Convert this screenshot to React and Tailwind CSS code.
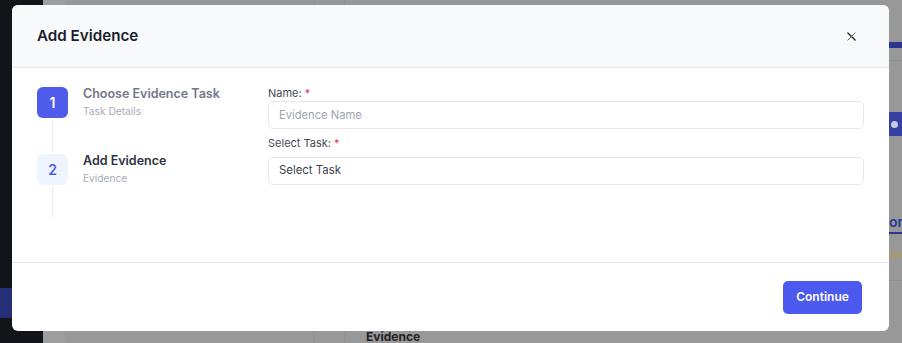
import React from 'react';

const font = { fontFamily: 'Inter, "Noto Sans", sans-serif' };

function Step({ num, title, sub, active }) {
    return (
        <div className="flex">
            <div className="flex flex-col items-center w-[31px]">
                <div className={active
                    ? "w-[31px] h-[31px] rounded-[6px] bg-[#4f5bea] text-white flex items-center justify-center text-[14px] font-semibold"
                    : "w-[31px] h-[31px] rounded-[6px] bg-[#eef5ff] text-[#4f5bea] flex items-center justify-center text-[14px] font-semibold"}>
                    {num}
                </div>
                <div className="my-[3px] h-[30px] border-l border-dotted border-[#d6d9e0]"></div>
            </div>
            <div className="ml-[15px] -mt-[1px]">
                <p className={active ? "text-[12.5px] leading-[16px] font-semibold text-[#72768a]" : "text-[12.5px] leading-[16px] font-semibold text-[#2e3140]"}>{title}</p>
                <p className="mt-[2px] text-[10.2px] leading-[14px] text-[#a7abb8]">{sub}</p>
            </div>
        </div>
    );
}

function App() {
    return (
        <div className="relative w-[902px] h-[343px] overflow-hidden bg-[#989898] flex" style={font}>
            {/* dimmed page behind */}
            <div className="w-[43px] h-full bg-[#13131a] flex flex-col">
                <div className="mt-[288px] h-[30px] bg-[#272e78]"></div>
            </div>
            <div className="w-[22px] h-full bg-[#9d9d9d]"></div>
            <div className="flex-1 h-full flex">
                <div className="w-[250px] h-full border-r border-[#929292]"></div>
                <div className="w-[30px] h-full border-r border-[#929292]"></div>
                <div className="flex-1 flex flex-col justify-end">
                    <p className="ml-[21px] mb-[-2px] text-[12px] leading-[16px] font-bold text-[#1f2023]">Evidence</p>
                </div>
                <div className="w-[13px] h-full flex flex-col">
                    <div className="mt-[42px] h-[6px] bg-[#2b3591]"></div>
                    <div className="mt-[12px] h-px bg-[#8e8e8e]"></div>
                    <div className="mt-[51px] h-[24px] bg-[#3540a3] flex items-center pl-[2px]">
                        <div className="w-[7px] h-[7px] rounded-full bg-[#c9cbe0]"></div>
                    </div>
                    <div className="mt-[78px] text-[14px] leading-[16px] font-semibold text-[#283593] whitespace-nowrap">or</div>
                    <div className="mt-[2px] h-[2px] bg-[#2b3591]"></div>
                    <div className="mt-[16px] text-[9px] leading-[10px] text-[#b89a34] whitespace-nowrap">um</div>
                    <div className="mt-[20px] h-px bg-[#8e8e8e]"></div>
                </div>
            </div>

            {/* modal */}
            <div className="absolute left-[12px] top-[5px] w-[877px] h-[326px] bg-white rounded-[6px] overflow-hidden flex flex-col">
                <div className="h-[63px] shrink-0 bg-[#f8f9fb] border-b border-[#e4e6ea] flex items-center justify-between pl-[25px] pr-[33px]">
                    <h2 className="text-[15.2px] font-semibold text-[#1b1e2b]">Add Evidence</h2>
                    <svg width="9" height="9" viewBox="0 0 10 10" className="mt-[1px]">
                        <path d="M1 1 L9 9" stroke="#2a2d3a" strokeWidth="1.6" strokeLinecap="round" />
                        <path d="M9 1 L1 9" stroke="#5a5d6a" strokeWidth="1.1" strokeLinecap="round" />
                    </svg>
                </div>

                <div className="h-[195px] shrink-0 flex pl-[25px] pr-[25px] pt-[19px] border-b border-[#e4e6ea]">
                    <div className="w-[231px] shrink-0 flex flex-col">
                        <Step num="1" title="Choose Evidence Task" sub="Task Details" active />
                        <Step num="2" title="Add Evidence" sub="Evidence" />
                    </div>
                    <div className="flex-1 flex flex-col -mt-[1px]">
                        <label className="text-[11px] leading-[14px] text-[#454955]">Name: <span className="text-[#e0375a]">*</span></label>
                        <div className="mt-[1px] h-[28px] border border-[#e5e7eb] rounded-[5px] flex items-center px-[10px]">
                            <span className="text-[11.2px] text-[#a0a4b1]">Evidence Name</span>
                        </div>
                        <label className="mt-[7px] text-[11px] leading-[14px] text-[#454955]">Select Task: <span className="text-[#e0375a]">*</span></label>
                        <div className="mt-[7px] h-[28px] border border-[#e5e7eb] rounded-[5px] flex items-center px-[10px]">
                            <span className="text-[11.4px] text-[#3a3e4b]">Select Task</span>
                        </div>
                    </div>
                </div>

                <div className="flex-1 flex items-center justify-end pr-[27px]">
                    <button className="w-[79px] h-[33px] rounded-[5px] bg-[#4c59ef] text-white text-[12px] font-semibold">Continue</button>
                </div>
            </div>
        </div>
    );
}

export default App;
